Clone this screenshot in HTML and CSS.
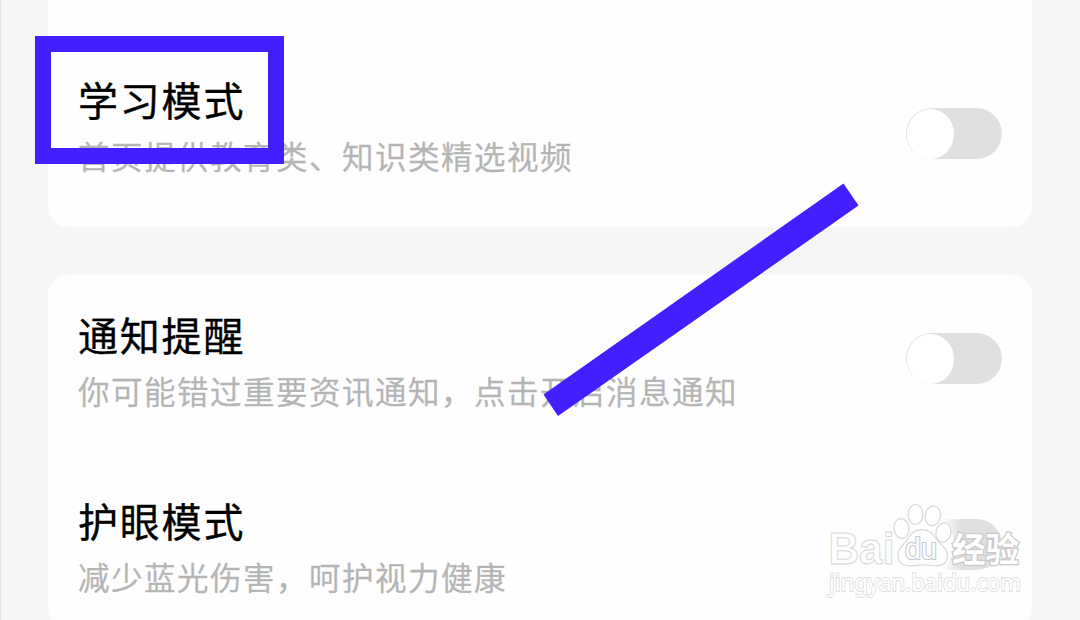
FILE: index.html
```html
<!DOCTYPE html>
<html lang="zh-CN">
<head>
<meta charset="utf-8">
<title>设置</title>
<link rel="stylesheet" href="styles.css">
</head>
<body>
<main class="page">
  <section class="card card-first">
    <div class="row">
      <div class="copy"><h2 class="title">学习模式</h2><p class="desc">首页提供教育类、知识类精选视频</p></div>
      <span class="toggle toggle-first"><span class="knob"></span></span>
    </div>
  </section>
  <section class="card card-second">
    <div class="row">
      <div class="copy"><h2 class="title">通知提醒</h2><p class="desc">你可能错过重要资讯通知，点击开启消息通知</p></div>
      <span class="toggle"><span class="knob"></span></span>
    </div>
    <div class="row">
      <div class="copy"><h2 class="title">护眼模式</h2><p class="desc">减少蓝光伤害，呵护视力健康</p></div>
      <span class="toggle toggle-faded"><span class="knob"></span></span>
    </div>
  </section>
  <div class="highlight"></div>
  <svg class="pointer" width="316" height="234" viewBox="543 183 316 234"><path d="M843.5 183.5 858.5 205.5 558 416 543.5 394.5Z" fill="#431eff"/></svg>
  <svg class="watermark" width="220" height="120" viewBox="820 496 220 120">
    <g class="mark">
      <text class="brand" x="828.500" y="564" textLength="66" lengthAdjust="spacingAndGlyphs">Bai</text>
      <ellipse cx="901.5" cy="528.5" rx="7.5" ry="10" transform="rotate(-8 901.5 528.5)"/>
      <ellipse cx="915.5" cy="514.5" rx="7.3" ry="10"/>
      <ellipse cx="932.8" cy="515.8" rx="7.6" ry="10" transform="rotate(12 932.8 515.8)"/>
      <ellipse cx="943.5" cy="532.5" rx="7.5" ry="9.7" transform="rotate(12 943.5 532.5)"/>
      <path d="M909 537C915 527.500 929 527 935 537C938 543 947.500 547 947.500 555.500C947.500 567 937.500 566.500 927.500 565C919 564 914 567 906.500 565.500C896 563.500 896 552 902 546C905.500 542.500 907 540.500 909 537Z"/>
      <text class="du" x="905" y="559" textLength="32" lengthAdjust="spacingAndGlyphs">du</text>
      <text class="cjk" x="952" y="562" textLength="67" lengthAdjust="spacingAndGlyphs">经验</text>
      <text class="site" x="829" y="590.500" textLength="192" lengthAdjust="spacingAndGlyphs">jingyan.baidu.com</text>
    </g>
  </svg>
</main>
</body>
</html>
```
FILE: styles.css
```css
* { box-sizing: border-box; }
body { margin: 0; }
.page {
  position: relative;
  width: 1080px;
  height: 620px;
  overflow: hidden;
  padding: 0 48px 0 47px;
  background: #f6f6f6;
  border-left: 1px solid #e2e2e2;
  font-family: "Noto Sans CJK SC", sans-serif;
}
.card { width: 984px; background: #fefefe; padding: 0 30px; }
.card-first { height: 227px; border-radius: 0 0 20px 20px; padding-top: 69px; }
.card-second { height: 353px; margin-top: 48px; border-radius: 20px; padding-top: 29px; }
.row { display: flex; justify-content: space-between; height: 186px; }
.copy { display: flex; flex-direction: column; }
.title { margin: 0; font-size: 40px; letter-spacing: 1.8px; line-height: 60px; font-weight: 400; color: #000; -webkit-text-stroke: 0.35px #000; }
.desc { margin: 0; font-size: 31.5px; letter-spacing: 1.5px; line-height: 52px; font-weight: 350; color: #b4b4b4; -webkit-text-stroke: 0.4px #b4b4b4; white-space: nowrap; }
.toggle { width: 96px; height: 51px; margin-top: 29px; border-radius: 26px; background: #e0e0e0; padding: 0.5px; }
.toggle-first { margin-top: 39px; }
.toggle-faded { background: linear-gradient(90deg, #fefefe 38%, #e0e0e0 58%); }
.knob { display: block; width: 47.5px; height: 50px; border-radius: 50%; background: #fff; }
.highlight { position: absolute; left: 34px; top: 36px; width: 249px; height: 128px; border: 16px solid #431eff; }
.pointer { position: absolute; left: 542px; top: 183px; }
.watermark { position: absolute; left: 819px; top: 496px; }
.mark { fill: #fff; stroke: #d8d8d8; stroke-width: 1.2px; }
.mark text { paint-order: stroke; stroke-width: 1.8px; }
.mark .brand { font: 700 44px "Liberation Sans", sans-serif; paint-order: normal; stroke-width: 1px; }
.mark .du { font: 400 29px "Liberation Sans", sans-serif; stroke: #c8c8c8; stroke-width: 2.2px; }
.mark .cjk { font: 700 34px "Noto Sans CJK SC", sans-serif; stroke: #c8c8c8; stroke-width: 2.4px; }
.mark .site { font: 400 23px "Noto Sans", sans-serif; stroke: #dedede; }
```
